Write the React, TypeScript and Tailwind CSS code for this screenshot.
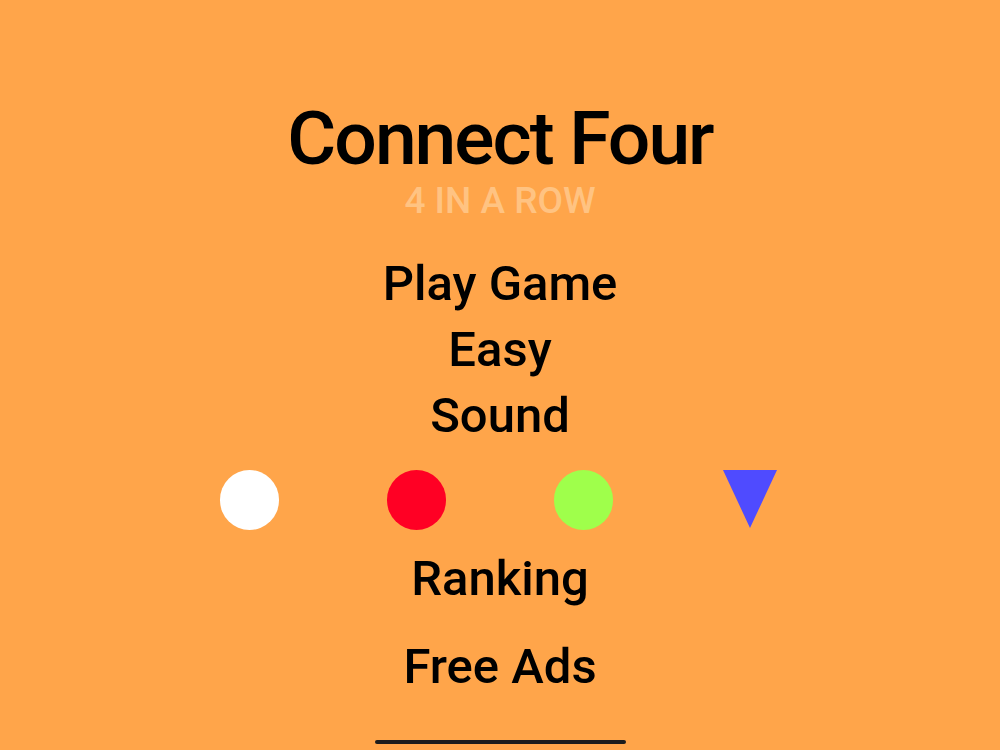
const menuFont = { fontFamily: 'Roboto, "Liberation Sans", sans-serif' }

function MenuItem({ label, className = '' }: { label: string; className?: string }) {
  return (
    <button className={`text-[49px] leading-none font-medium text-black ${className}`} style={menuFont}>
      {label}
    </button>
  )
}

export default function App() {
  return (
    <div className="w-[1000px] h-[750px] bg-[#FFA54A] flex flex-col items-center overflow-hidden" style={menuFont}>
      <h1 className="mt-[101px] text-[75px] leading-none font-medium tracking-[-2px] text-black">Connect Four</h1>
      <p className="mt-[6px] text-[37px] leading-none font-medium text-[#FFC382]">4 IN A ROW</p>

      <MenuItem label="Play Game" className="mt-[40px]" />
      <MenuItem label="Easy" className="mt-[17px]" />
      <MenuItem label="Sound" className="mt-[17px]" />

      <div className="mt-[30px] w-[667px] grid grid-cols-4 items-center justify-items-center">
        <div className="w-[59px] h-[60px] rounded-full bg-white" />
        <div className="w-[59px] h-[60px] rounded-full bg-[#FF0024]" />
        <div className="w-[59px] h-[60px] rounded-full bg-[#9FFF4B]" />
        <svg width="54" height="60" viewBox="0 0 54 60">
          <polygon points="0,0 54,0 27,58" fill="#4F4BFF" />
        </svg>
      </div>

      <MenuItem label="Ranking" className="mt-[24px]" />
      <MenuItem label="Free Ads" className="mt-[39px]" />

      <div className="mt-[49px] w-[251px] h-[4px] rounded-full bg-[#1c1c1c]" />
    </div>
  )
}
